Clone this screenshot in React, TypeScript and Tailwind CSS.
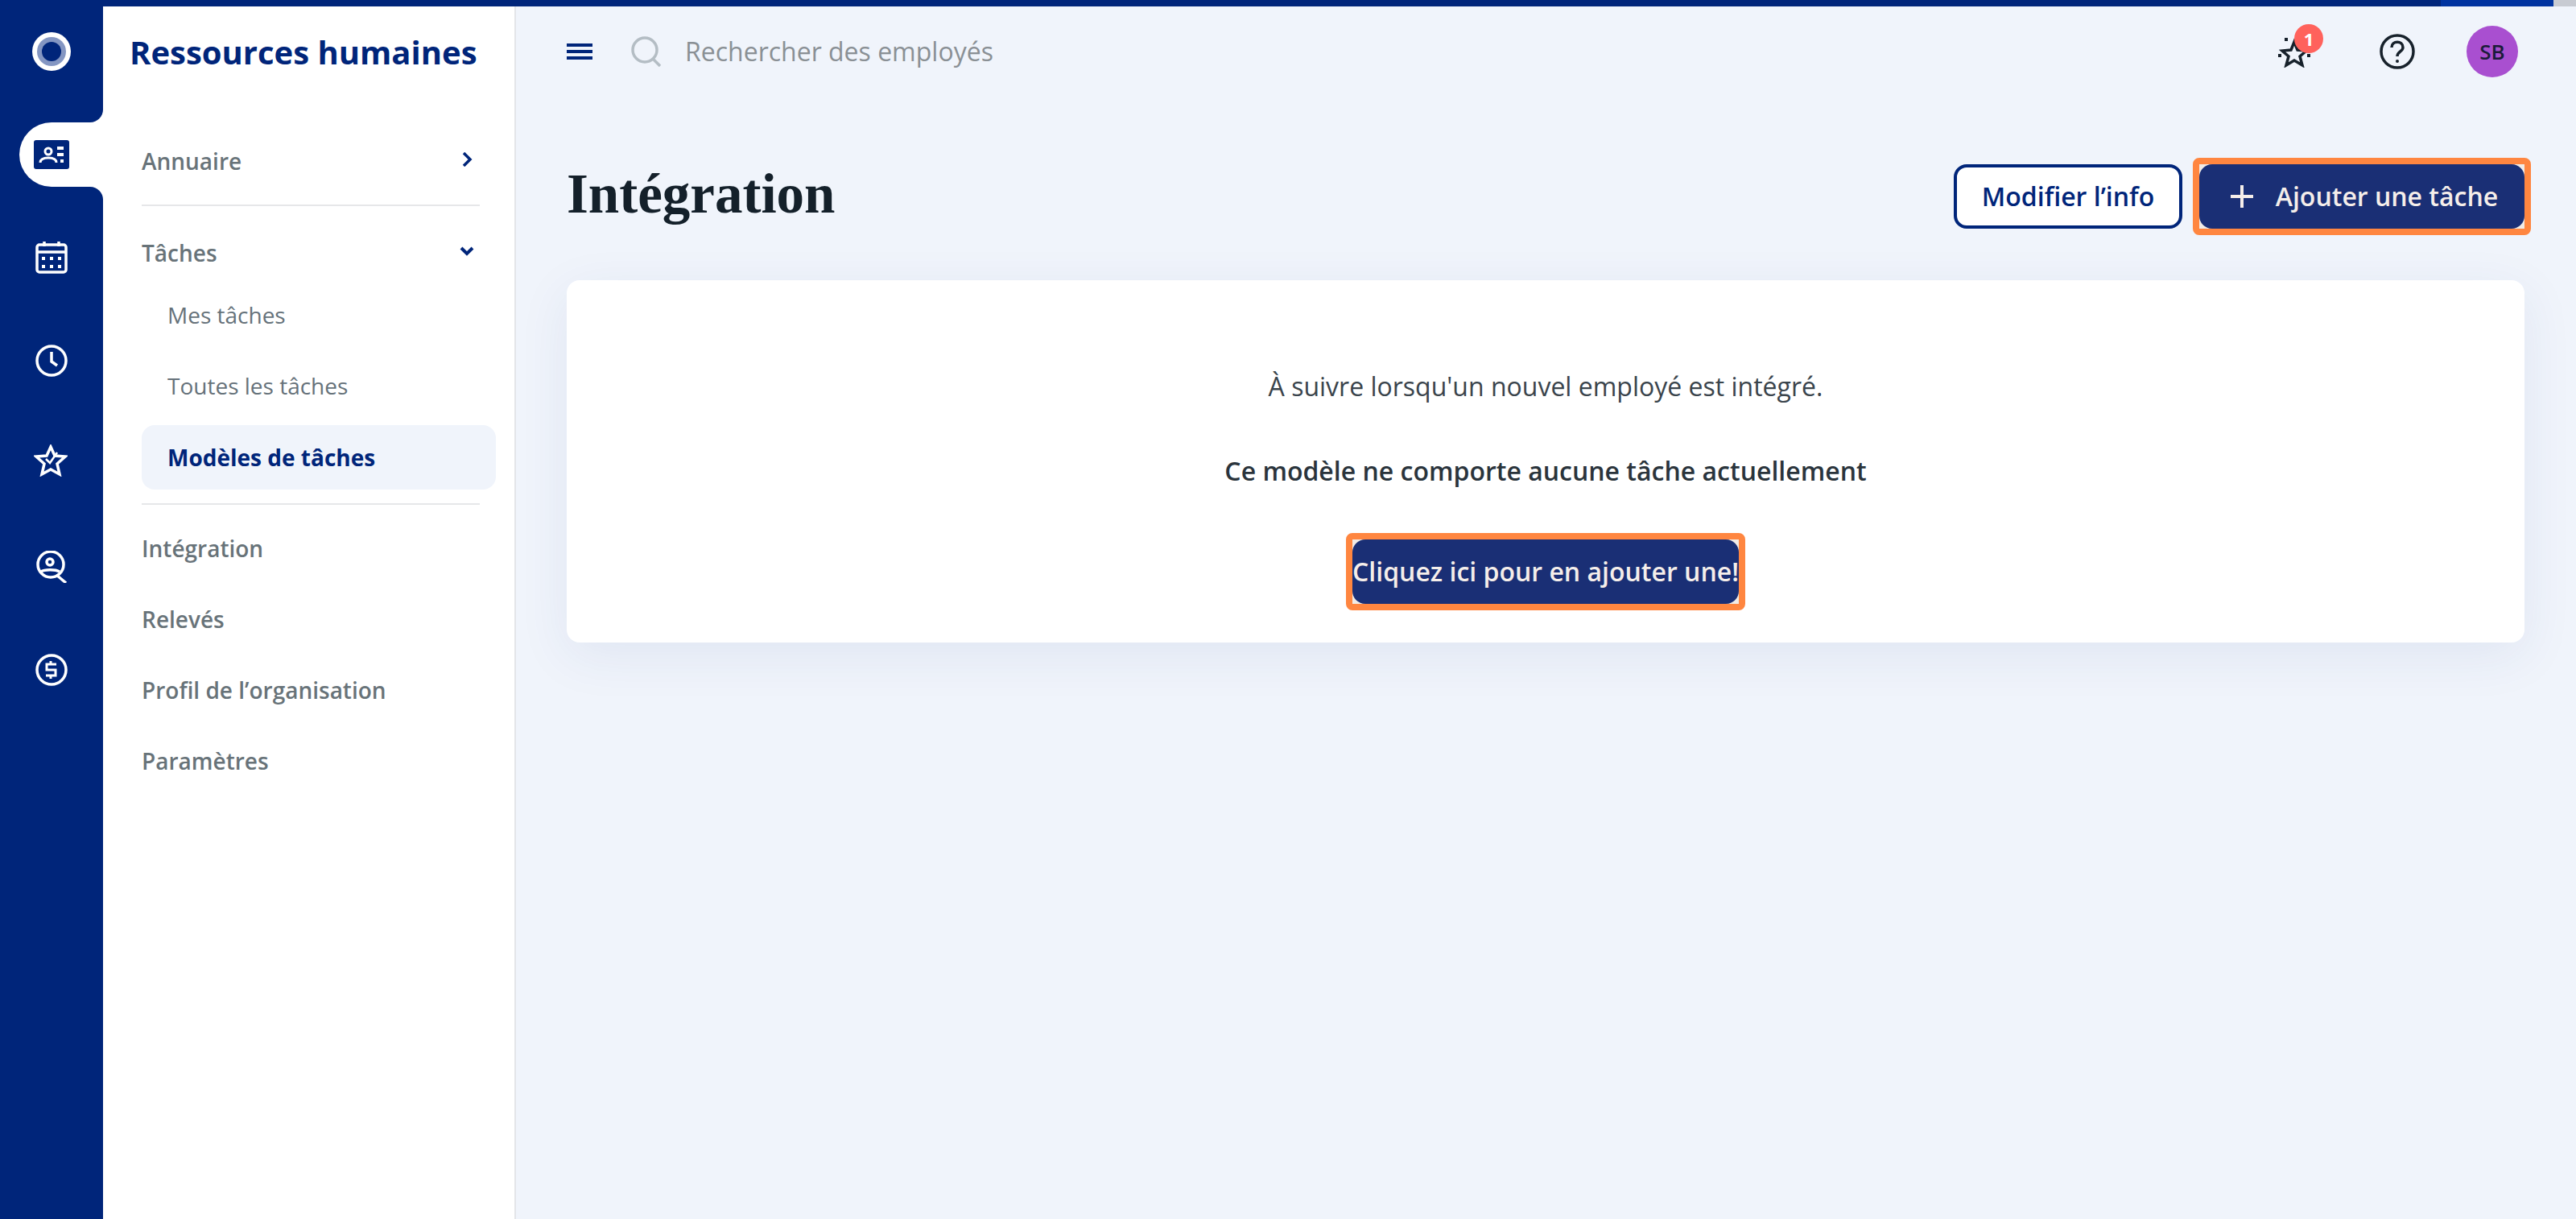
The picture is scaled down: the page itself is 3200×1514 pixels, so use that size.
import React from 'react';

const navy = '#00257a';

const Rail: React.FC = () => (
  <aside className="flex w-[128px] shrink-0 flex-col bg-white">
    <div className="flex h-[144px] flex-col items-center rounded-br-[16px] bg-[#00257a] pt-[32px]">
      <svg width="48" height="48" viewBox="0 0 48 48">
        <circle cx="24" cy="24" r="24" fill="#fff" />
        <circle cx="24" cy="24" r="18" fill="#8496c2" />
        <circle cx="24" cy="24" r="12" fill="#00257a" />
      </svg>
    </div>
    <div className="bg-[#00257a] pl-[24px]">
      <div className="flex h-[80px] items-center rounded-l-[40px] bg-white pl-[18px]">
        <svg width="44" height="36" viewBox="0 0 44 36">
          <rect width="44" height="36" rx="3" fill="#00257a" />
          <circle cx="18" cy="14" r="4" fill="none" stroke="#fff" strokeWidth="3" />
          <path d="M8 28c0-4 4-6 10-6s10 2 10 6" fill="none" stroke="#fff" strokeWidth="3" />
          <path d="M29 8h8v4h-8zM29 16h8v4h-8zM33 24h4v4h-4z" fill="#fff" />
        </svg>
      </div>
    </div>
    <div className="flex flex-1 flex-col items-center rounded-tr-[16px] bg-[#00257a] pt-[68px]">
      <svg width="40" height="40" viewBox="0 0 40 40" fill="none" stroke="#fff" strokeWidth="3.5">
        <rect x="2" y="4" width="36" height="34" rx="3" />
        <path d="M2 13h36M11 0v6M29 0v6" />
        <path d="M8 19h4v4H8zM18 19h4v4h-4zM28 19h4v4h-4zM8 29h4v4H8zM18 29h4v4h-4zM28 29h4v4h-4z" fill="#fff" stroke="none" />
      </svg>
      <svg className="mt-[88px]" width="40" height="40" viewBox="0 0 40 40" fill="none" stroke="#fff" strokeWidth="3.5">
        <circle cx="20" cy="20" r="18" />
        <path d="M20 9v12l7 5" />
      </svg>
      <svg className="mt-[84px] mr-[2px]" width="42" height="40" viewBox="0 0 42 40" fill="none" stroke="#fff" strokeWidth="3.5">
        <path d="M21 3l5 11 13 1-10 9 3 13-11-6-11 6 3-13L3 15l13-1z" />
        <path d="M15 18l5 5 9-13" strokeWidth="2.5" />
      </svg>
      <svg className="mt-[92px]" width="40" height="40" viewBox="0 0 40 40" fill="none" stroke="#fff" strokeWidth="3.5">
        <circle cx="19" cy="17" r="16" />
        <circle cx="18" cy="14" r="4" />
        <path d="M7 26c4-3 18-3 23 0M26 30l12 10" />
      </svg>
      <svg className="mt-[88px]" width="40" height="40" viewBox="0 0 40 40" fill="none" stroke="#fff" strokeWidth="3.5">
        <circle cx="20" cy="20" r="18" />
        <path d="M26 13H14v7h11v7H13M19 9v3M19 28v3" strokeWidth="3" />
      </svg>
    </div>
  </aside>
);

const MainItem: React.FC<{ label: string; className?: string }> = ({ label, className }) => (
  <div className={`flex h-[88px] items-center text-[#687379] ${className ?? ''}`}>{label}</div>
);

const SubNav: React.FC = () => (
  <nav className="flex w-[513px] shrink-0 flex-col border-r-2 border-[#e3e5e9] bg-white pl-[48px] text-[28px] leading-[40px] font-semibold">
    <h2 className="ml-[-15px] flex h-[120px] items-center pb-[6px] text-[40px] font-bold text-[#00257a]">Ressources humaines</h2>
    <div className="mt-[28px] w-[420px]">
      <div className="flex h-[88px] items-center justify-between pr-[9px] text-[#687379]">
        Annuaire
        <svg className="mt-[-4px]" width="13" height="18" viewBox="0 0 13 18" fill="none" stroke={navy} strokeWidth="3.5">
          <path d="M2 1l8 8-8 8" />
        </svg>
      </div>
      <div className="mt-[10px] h-[2px] bg-[#e6e7e9]" />
      <div className="flex h-[116px] items-center justify-between pr-[6px] text-[#687379]">
        Tâches
        <svg className="mt-[-4px]" width="20" height="12" viewBox="0 0 20 12" fill="none" stroke={navy} strokeWidth="4">
          <path d="M3 2l7 7 7-7" />
        </svg>
      </div>
      <div className="mt-[-21px] flex h-[80px] items-center pl-[32px] font-normal text-[#66727a]">Mes tâches</div>
      <div className="mt-[8px] flex h-[80px] items-center pl-[32px] font-normal text-[#66727a]">Toutes les tâches</div>
      <div className="mt-[9px] flex h-[80px] w-[440px] items-center rounded-[16px] bg-[#f0f4fb] pl-[32px] font-bold text-[#00257a]">
        Modèles de tâches
      </div>
      <div className="mt-[17px] h-[2px] bg-[#e6e7e9]" />
      <MainItem label="Intégration" className="mt-[10px]" />
      <MainItem label="Relevés" />
      <MainItem label="Profil de l’organisation" />
      <MainItem label="Paramètres" />
    </div>
  </nav>
);

const Highlighted: React.FC<{ children: React.ReactNode; className: string }> = ({ children, className }) => (
  <div className={`rounded-[8px] border-[8px] border-[#ff8640] bg-[#f1ebe6] ${className}`}>
    <button className="flex h-full w-full items-center justify-center rounded-[16px] bg-[#1a2f75] text-[#f5eeea]">
      {children}
    </button>
  </div>
);

const App: React.FC = () => (
  <div className="flex h-[1514px] w-[3200px] flex-col overflow-hidden bg-[#f0f4fb] font-['Open_Sans',sans-serif]">
    <div className="flex h-[8px] shrink-0 bg-[#00257a]">
      <div className="ml-auto h-full w-[140px] bg-[#0033a0]" />
      <div className="h-full w-[28px] bg-[#c8cbd2]" />
    </div>
    <div className="flex min-h-0 flex-1">
      <Rail />
      <SubNav />
      <main className="flex min-w-0 flex-1 flex-col pr-[64px] pl-[63px]">
        <header className="flex h-[112px] shrink-0 items-center">
          <svg className="mr-[48px] shrink-0" width="32" height="20" viewBox="0 0 32 20" fill={navy}>
            <rect width="32" height="4" />
            <rect y="8" width="32" height="4" />
            <rect y="16" width="32" height="4" />
          </svg>
          <svg className="mr-[29px] shrink-0" width="38" height="38" viewBox="0 0 38 38" fill="none" stroke="#b4bdc4" strokeWidth="3.5">
            <circle cx="17" cy="17" r="15" />
            <path d="M27 28l9 9" />
          </svg>
          <span className="text-[32px] text-[#8a9095]">Rechercher des employés</span>
          <div className="relative mr-[86px] ml-auto h-[40px] w-[40px]">
            <svg width="40" height="40" viewBox="0 0 40 40" fill="none" stroke="#17212b" strokeWidth="3.5">
              <path d="M20 8l4 10 11 1-8 7 3 11-10-6-10 6 3-11-8-7 11-1z" />
              <path d="M8 3h4v4H8zM0 23h4v4H0zM36 23h4v4h-4z" fill="#17212b" stroke="none" />
            </svg>
            <span className="absolute top-[-14px] right-[-16px] flex h-[36px] w-[36px] items-center justify-center rounded-full bg-[#ff625c] text-[22px] font-bold text-white">1</span>
          </div>
          <svg className="mr-[64px]" width="44" height="44" viewBox="0 0 44 44" fill="none" stroke="#17212b" strokeWidth="3.5">
            <circle cx="22" cy="22" r="20" />
            <path d="M15 17c0-9 14-9 14 0 0 5-7 5-7 11" />
            <circle cx="22" cy="34" r="2" fill="#17212b" stroke="none" />
          </svg>
          <div className="mr-[8px] flex h-[64px] w-[64px] items-center justify-center rounded-full bg-[#a94fd0] text-[26px] font-semibold text-[#1c1c3a]">SB</div>
        </header>
        <div className="mt-[76px] flex h-[96px] shrink-0 items-center">
          <h1 className="mt-[-6px] font-['Liberation_Serif',serif] text-[69px] leading-none font-bold text-[#14202a]">Intégration</h1>
          <button className="mr-[13px] ml-auto flex h-[80px] w-[284px] items-center justify-center rounded-[16px] border-[4px] border-[#00257a] bg-white text-[32px] font-semibold text-[#00257a]">
            Modifier l’info
          </button>
          <Highlighted className="mr-[-8px] h-[96px] w-[420px] text-[32px] font-semibold">
            <svg className="mr-[28px] ml-[6px]" width="28" height="28" viewBox="0 0 28 28" stroke="#f5eeea" strokeWidth="4">
              <path d="M14 0v28M0 14h28" />
            </svg>
            Ajouter une tâche
          </Highlighted>
        </div>
        <section className="mt-[56px] flex h-[450px] shrink-0 flex-col items-center rounded-[16px] bg-white pt-[110px] shadow-[0_16px_64px_rgba(40,70,140,0.08)]">
          <p className="text-[32px] leading-[44px] text-[#3a444c]">À suivre lorsqu'un nouvel employé est intégré.</p>
          <p className="mt-[61px] text-[32px] leading-[44px] font-semibold text-[#2a343c]">Ce modèle ne comporte aucune tâche actuellement</p>
          <Highlighted className="mt-[55px] h-[96px] w-[496px] text-[32px] font-semibold whitespace-nowrap">
            Cliquez ici pour en ajouter une!
          </Highlighted>
        </section>
      </main>
    </div>
  </div>
);

export default App;
